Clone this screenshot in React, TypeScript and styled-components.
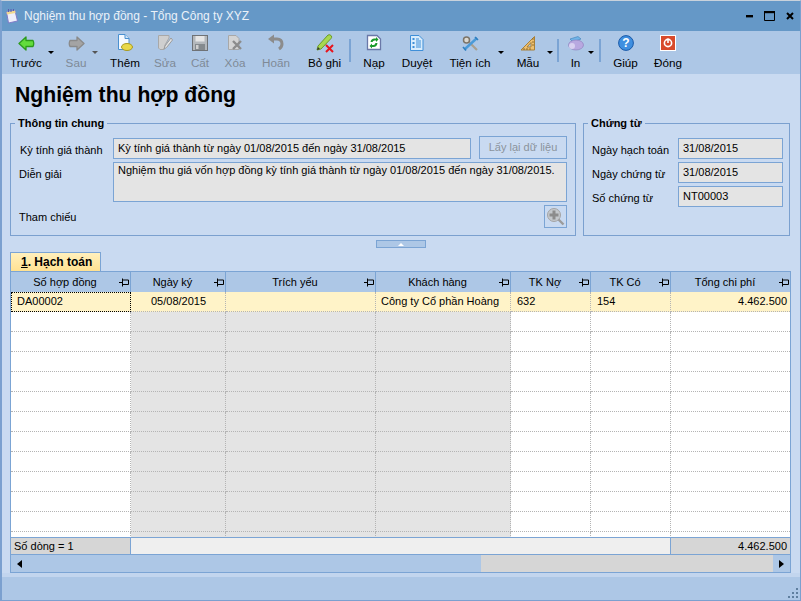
import React from 'react'
import styled, { createGlobalStyle } from 'styled-components'

const GlobalStyle = createGlobalStyle`
  html, body {
    margin: 0;
    padding: 0;
    background: #c9daf1;
  }
  body {
    font-family: "Liberation Sans", Arial, sans-serif;
    font-size: 11px;
    color: #000;
  }
`

const Window = styled.div`
  box-sizing: border-box;
  width: 801px;
  height: 601px;
  display: flex;
  flex-direction: column;
  overflow: hidden;
  border-top: 1px solid #c8d2dc;
  border-left: 2px solid #7ba0cf;
  border-right: 1px solid #7ba0cf;
  border-bottom: 1px solid #7ba0cf;
  background: #c9daf1;
`

const TitleBar = styled.div`
  height: 30px;
  flex: none;
  margin-left: -2px;
  padding-left: 5px;
  display: flex;
  align-items: center;
  background: #6598c7;
  color: #eaf1f9;
  font-size: 12px;
`

const TitleText = styled.span`
  margin-left: 5px;
  flex: 1;
`

const WindowControls = styled.div`
  display: flex;
  align-items: center;
  gap: 11px;
  padding-right: 6px;
`

const Toolbar = styled.div`
  height: 43px;
  flex: none;
  display: flex;
  background: #adc7e6;
`

const ToolButton = styled.div<{ $w: number; $mr?: number; $off?: boolean }>`
  position: relative;
  flex: none;
  box-sizing: border-box;
  width: ${(p) => p.$w}px;
  margin-right: ${(p) => p.$mr ?? 0}px;
  display: flex;
  flex-direction: column;
  align-items: center;
  padding-top: 2px;
  color: ${(p) => (p.$off ? '#7f8a96' : '#000')};
  white-space: nowrap;
`

const ToolIcon = styled.div`
  height: 20px;
  width: 20px;
  display: flex;
  align-items: center;
  justify-content: center;
`

const ToolLabel = styled.span`
  margin-top: 2px;
  line-height: 15px;
  font-size: 11.7px;
`

const Caret = styled.span<{ $left: number; $off?: boolean }>`
  position: absolute;
  left: ${(p) => p.$left}px;
  top: 20px;
  border-left: 3px solid transparent;
  border-right: 3px solid transparent;
  border-top: 3px solid ${(p) => (p.$off ? '#555' : '#000')};
`

const ToolSep = styled.div`
  flex: none;
  width: 2px;
  height: 23px;
  margin-top: 8px;
  background: #7ba4d4;
`

const Content = styled.main`
  flex: 1;
  min-height: 0;
  display: flex;
  flex-direction: column;
  padding: 0 9px 0 8px;
`

const PageTitle = styled.h1`
  margin: 6px 0 0 5px;
  height: 30px;
  line-height: 30px;
  font-size: 21.2px;
  font-weight: bold;
  flex: none;
`

const Groups = styled.div`
  flex: none;
  display: flex;
  gap: 7px;
  margin-top: 6px;
`

const Group = styled.fieldset<{ $w: number }>`
  box-sizing: border-box;
  width: ${(p) => p.$w}px;
  height: 120px;
  margin: 0;
  min-width: 0;
  padding: 8px 8px 0 8px;
  border: 1px solid #7ba0cf;
`

const GroupTitle = styled.legend`
  margin-left: -4px;
  padding: 0 3px;
  height: 14px;
  line-height: 14px;
  font-weight: bold;
  font-size: 11px;
`

const Field = styled.div<{ $h?: number; $gap?: number }>`
  display: flex;
  align-items: flex-start;
  height: ${(p) => p.$h ?? 21}px;
  margin-top: ${(p) => p.$gap ?? 0}px;
`

const FieldLabel = styled.label<{ $w: number; $dy?: number; $dx?: number }>`
  flex: none;
  box-sizing: border-box;
  width: ${(p) => p.$w}px;
  line-height: 15px;
  padding-top: ${(p) => p.$dy ?? 5}px;
  padding-left: ${(p) => p.$dx ?? 0}px;
`

const ReadOnly = styled.div<{ $w: number; $h?: number }>`
  box-sizing: border-box;
  flex: none;
  width: ${(p) => p.$w}px;
  height: ${(p) => p.$h ?? 21}px;
  padding: 2px 4px;
  line-height: 15px;
  background: #e4e4e4;
  border: 1px solid #7ba4d4;
  white-space: nowrap;
  overflow: hidden;
`

const MultiLine = styled(ReadOnly)`
  padding-top: 0;
`

const FetchButton = styled.div`
  box-sizing: border-box;
  flex: none;
  width: 88px;
  height: 23px;
  margin-left: 8px;
  margin-top: -2px;
  border: 1px solid #7ba4d4;
  color: #8b939c;
  text-align: center;
  line-height: 21px;
  background: #c9daf1;
`

const ZoomButton = styled.div`
  box-sizing: border-box;
  width: 23px;
  height: 23px;
  margin-left: auto;
  border: 1px solid #7ba4d4;
  display: flex;
  align-items: center;
  justify-content: center;
`

const Splitter = styled.div`
  flex: none;
  box-sizing: border-box;
  align-self: center;
  width: 50px;
  height: 8px;
  margin: 4px 0 0 1px;
  background: #adc7e6;
  border: 1px solid #7ba4d4;
  display: flex;
  align-items: center;
  justify-content: center;
`

const SplitterArrow = styled.span`
  border-left: 3px solid transparent;
  border-right: 3px solid transparent;
  border-bottom: 3px solid #fff;
`

const Tab = styled.div`
  flex: none;
  box-sizing: border-box;
  width: 91px;
  height: 20px;
  margin-top: 4px;
  border: 1px solid #7ba4d4;
  border-bottom: none;
  background: linear-gradient(#fff0bd, #ffe08f);
  font-weight: bold;
  line-height: 19px;
  padding-left: 10px;
  font-size: 12px;

  u {
    text-decoration: underline;
  }
`

const GridFrame = styled.div`
  flex: none;
  box-sizing: border-box;
  width: 781px;
  height: 302px;
  margin-top: -1px;
  border: 1px solid #7ba4d4;
  display: flex;
  flex-direction: column;
  background: #fff;
`

const COLUMNS = '120px 95px 150px 135px 80px 80px 119px'

const HeaderRow = styled.div`
  flex: none;
  display: grid;
  grid-template-columns: ${COLUMNS};
  height: 20px;
  background: #adc7e6;
`

const HeaderCell = styled.div`
  position: relative;
  box-sizing: border-box;
  border-right: 1px solid #7ba4d4;
  text-align: center;
  line-height: 20px;
  padding-right: 11px;

  &:last-child {
    border-right: none;
  }

  svg {
    position: absolute;
    right: 1px;
    top: 6px;
  }
`

const GridBody = styled.div`
  flex: 1;
  min-height: 0;
  overflow: hidden;
`

const DataRow = styled.div<{ $current?: boolean }>`
  display: grid;
  grid-template-columns: ${COLUMNS};
  height: 20px;
  background: ${(p) => (p.$current ? '#fff3c8' : '#fff')};
`

const DataCell = styled.div<{ $shade?: boolean; $right?: boolean; $focus?: boolean; $pl?: number }>`
  box-sizing: border-box;
  height: 20px;
  line-height: 19px;
  padding: 0 3px 0 ${(p) => p.$pl ?? 6}px;
  white-space: nowrap;
  overflow: hidden;
  text-align: ${(p) => (p.$right ? 'right' : 'left')};
  background: ${(p) => (p.$shade ? '#e4e4e4' : 'transparent')};
  border-right: 1px dotted #b4b4b4;
  border-bottom: 1px dotted #b4b4b4;
  ${(p) => p.$focus && 'outline: 1px dotted #000; outline-offset: -1px;'}

  &:last-child {
    border-right: none;
  }
`

const SummaryRow = styled.div`
  flex: none;
  display: grid;
  grid-template-columns: 120px 540px 119px;
  height: 16px;
  border-top: 1px solid #7ba4d4;
  border-bottom: 1px solid #7ba4d4;
  line-height: 16px;
`

const SummaryCell = styled.div<{ $blank?: boolean; $right?: boolean }>`
  box-sizing: border-box;
  padding: 0 3px;
  background: ${(p) => (p.$blank ? '#efefef' : '#d6d6d6')};
  text-align: ${(p) => (p.$right ? 'right' : 'left')};
  border-right: 1px solid #7ba4d4;

  &:last-child {
    border-right: none;
  }
`

const ScrollBar = styled.div`
  flex: none;
  height: 17px;
  display: flex;
  align-items: stretch;
  background: #adc7e6;
`

const ScrollArrow = styled.div<{ $w: number }>`
  flex: none;
  width: ${(p) => p.$w}px;
  display: flex;
  align-items: center;
  justify-content: center;
`

const ScrollTrack = styled.div`
  flex: 1;
`

const ScrollThumb = styled.div`
  flex: none;
  width: 292px;
  background: #d6d6d6;
`

const StatusBar = styled.div`
  height: 23px;
  flex: none;
  display: flex;
  justify-content: flex-end;
  align-items: flex-end;
  background: #adc7e6;
  box-shadow: 0 -4px 0 #c2d5ee;
  margin: 0 0 0 -2px;
`

const BackIcon = () => (
  <svg width="17" height="15" viewBox="0 0 17 15">
    <path d="M8 1 L1 7.5 L8 14 L8 10.5 L15 10.5 Q16.5 7.5 15 4.5 L8 4.5 Z" fill="#62dc3c" stroke="#2c9a1c" strokeWidth="1.3" strokeLinejoin="round" />
  </svg>
)

const ForwardIcon = () => (
  <svg width="17" height="15" viewBox="0 0 17 15">
    <path d="M9 1 L16 7.5 L9 14 L9 10.5 L2 10.5 Q.5 7.5 2 4.5 L9 4.5 Z" fill="#a4a4a4" stroke="#8a8a8a" strokeWidth="1.3" strokeLinejoin="round" />
  </svg>
)

const AddIcon = () => (
  <svg width="18" height="18" viewBox="0 0 18 18">
    <path d="M2.5 .5 H9 L13 4.5 V15.5 H2.5 Z" fill="#f4f9ff" stroke="#4a90d0" />
    <path d="M9 .5 V4.5 H13" fill="#cfe4f8" stroke="#4a90d0" />
    <ellipse cx="11" cy="13" rx="5.5" ry="3.5" fill="#e8d84a" stroke="#a89a20" />
  </svg>
)

const EditIcon = () => (
  <svg width="18" height="18" viewBox="0 0 18 18">
    <path d="M2.5 1.5 H13 V4 L9 11 L8 15.5 H4 L2.5 14 Z" fill="#cfcfcf" stroke="#a8a8a8" />
    <path d="M15 4 L9 12 L8 15 L10.5 13.5 L16.5 6 Z" fill="#e4e4e4" stroke="#9c9c9c" />
  </svg>
)

const SaveIcon = () => (
  <svg width="16" height="16" viewBox="0 0 16 16">
    <rect x=".5" y=".5" width="15" height="15" fill="#b4b8bc" stroke="#6f7276" />
    <rect x="3.5" y="1" width="9" height="5.5" fill="#e6e6e6" />
    <rect x="3" y="9" width="10" height="6" fill="#858a8e" />
    <rect x="4" y="10" width="2.5" height="4" fill="#d0d0d0" />
  </svg>
)

const DeleteIcon = () => (
  <svg width="18" height="18" viewBox="0 0 18 18">
    <path d="M2.5 1.5 H10 L13 4.5 V15.5 H2.5 Z" fill="#d4d4d4" stroke="#a8a8a8" />
    <path d="M7 7 L15 15 M15 7 L7 15" stroke="#8c8c8c" strokeWidth="2.4" />
  </svg>
)

const UndoIcon = () => (
  <svg width="18" height="18" viewBox="0 0 18 18">
    <path d="M5 5 H10 Q15 5 15 10 Q15 13 12 15" fill="none" stroke="#8c8c8c" strokeWidth="3" />
    <path d="M1 5 L7 .5 V9.5 Z" fill="#8c8c8c" />
  </svg>
)

const CancelIcon = () => (
  <svg width="20" height="20" viewBox="0 0 20 20">
    <path d="M3 13 L13 2 Q15 1 16.5 3 Q17 4.5 16 5.5 L6 16 L2 17 Z" fill="#a8d850" stroke="#6a9a28" />
    <path d="M2 17 L3 14 L5 16 Z" fill="#333" />
    <path d="M11 12 L18 19 M18 12 L11 19" stroke="#e8141c" strokeWidth="2" />
  </svg>
)

const ReloadIcon = () => (
  <svg width="16" height="18" viewBox="0 0 16 18">
    <path d="M1.5 1.5 H11 L14.5 5 V15.5 H1.5 Z" fill="#fff" stroke="#6a78a8" strokeWidth="1.3" />
    <path d="M4.5 8 Q5 4.5 8.5 4.5 H10 V3 L12.5 5.5 L10 8 V6.5 H8.5 Q7 6.5 6.5 8 Z" fill="#1a9a2a" />
    <path d="M11.5 9 Q11 13 7.5 13 H6 V14.5 L3.5 12 L6 9.5 V11 H7.5 Q9 11 9.5 9 Z" fill="#1a9a2a" />
  </svg>
)

const BrowseIcon = () => (
  <svg width="14" height="16" viewBox="0 0 14 16">
    <path d="M.5 .5 H9 L13 4.5 V15.5 H.5 Z" fill="#d8ecfc" stroke="#3f8fd8" />
    <path d="M2.5 3 H4.5 V5 H2.5 Z M2.5 7 H4.5 V9 H2.5 Z M2.5 11 H4.5 V13 H2.5 Z" fill="#3f8fd8" />
    <path d="M6 4 H9 M6 8 H11 M6 12 H11 M6 10 H11 M6 6 H11" stroke="#3f8fd8" />
  </svg>
)

const ToolsIcon = () => (
  <svg width="17" height="15" viewBox="0 0 17 15">
    <path d="M5 4 L15 14" stroke="#a8a090" strokeWidth="2.2" />
    <circle cx="4.5" cy="4" r="3" fill="#dcd8d0" stroke="#7c7468" strokeWidth="1.5" />
    <path d="M15 2 L3 13" stroke="#4a9ad8" strokeWidth="2.4" />
    <path d="M13 1 L16 4" stroke="#2f7fc0" strokeWidth="1.6" />
    <path d="M1 11 L4 14.5" stroke="#2f7fc0" strokeWidth="1.6" />
  </svg>
)

const RulerIcon = () => (
  <svg width="16" height="15" viewBox="0 0 16 15">
    <path d="M14.5 .5 V14 H1 Z" fill="#eec070" stroke="#a88038" />
    <path d="M11 6.5 V11 H7 Z" fill="#adc7e6" stroke="#a88038" />
    <path d="M12 3 H14 M12 6 H14 M12 9 H14 M4 12 V14 M7 12 V14 M10 12 V14" stroke="#7c5a20" strokeWidth=".8" />
  </svg>
)

const PrinterIcon = () => (
  <svg width="16" height="15" viewBox="0 0 16 15">
    <path d="M2 3 L10 .5 L13 3 L5 6 Z" fill="#6fb4e8" stroke="#3f80b8" strokeWidth=".6" />
    <ellipse cx="8" cy="9" rx="7.5" ry="5" fill="#b8a8e0" stroke="#8a7ab8" strokeWidth=".6" />
    <ellipse cx="4" cy="10" rx="3" ry="3" fill="#d8d0f0" />
  </svg>
)

const HelpIcon = () => (
  <svg width="16" height="16" viewBox="0 0 16 16">
    <circle cx="8" cy="8" r="7.4" fill="#3f8fe0" stroke="#1a5aa8" />
    <text x="8" y="12" textAnchor="middle" fontFamily="Liberation Sans" fontWeight="bold" fontSize="12" fill="#fff">
      ?
    </text>
  </svg>
)

const PowerIcon = () => (
  <svg width="16" height="16" viewBox="0 0 16 16">
    <rect x=".5" y=".5" width="15" height="15" fill="#d84a2c" stroke="#fff" />
    <circle cx="8" cy="8" r="3.6" fill="none" stroke="#fff" strokeWidth="1.6" />
    <path d="M8 3.5 V8" stroke="#fff" strokeWidth="1.6" />
  </svg>
)

const NoteIcon = () => (
  <svg width="14" height="15" viewBox="0 0 14 15">
    <path d="M1.5 3 L10 1.5 L12.5 12 L3.5 14 Z" fill="#eeeefa" stroke="#7f7cc8" />
    <path d="M1.5 3 L10 1.5 L10.6 4 L2 5.5 Z" fill="#f0d890" />
    <path d="M3.5 0 V3 M6 0 V3 M8.5 0 V2" stroke="#5a5ab0" />
  </svg>
)

const MagnifierIcon = () => (
  <svg width="19" height="19" viewBox="0 0 19 19">
    <circle cx="8" cy="8" r="6.5" fill="#c4c8cc" stroke="#a4a4a4" />
    <path d="M12.5 12.5 L17.5 17.5" stroke="#9c9c9c" strokeWidth="2.4" />
    <path d="M8 3.5 V12.5 M3.5 8 H12.5" stroke="#8c8c8c" strokeWidth="3" />
  </svg>
)

const PinIcon = () => (
  <svg width="10" height="9" viewBox="0 0 10 9">
    <path d="M0 4.5 H3 M3.5 .5 V8.5 M3.5 2 H9.5 V6.5 H3.5" fill="none" stroke="#000" />
  </svg>
)

const tools = [
  { label: 'Trước', w: 48, icon: <BackIcon />, caret: 46 },
  { label: 'Sau', w: 52, icon: <ForwardIcon />, off: true, caret: 42 },
  { label: 'Thêm', w: 46, icon: <AddIcon /> },
  { label: 'Sửa', w: 34, icon: <EditIcon />, off: true },
  { label: 'Cất', w: 36, icon: <SaveIcon />, off: true },
  { label: 'Xóa', w: 34, icon: <DeleteIcon />, off: true },
  { label: 'Hoãn', w: 48, icon: <UndoIcon />, off: true },
  { label: 'Bỏ ghi', w: 49, icon: <CancelIcon /> },
  { sep: true },
  { label: 'Nạp', w: 46, icon: <ReloadIcon /> },
  { label: 'Duyệt', w: 40, icon: <BrowseIcon /> },
  { label: 'Tiện ích', w: 66, icon: <ToolsIcon />, caret: 61 },
  { label: 'Mẫu', w: 50, mr: 4, icon: <RulerIcon />, caret: 44 },
  { sep: true },
  { label: 'In', w: 33, mr: 7, icon: <PrinterIcon />, caret: 29 },
  { sep: true },
  { label: 'Giúp', w: 49, icon: <HelpIcon /> },
  { label: 'Đóng', w: 36, icon: <PowerIcon /> },
]

const headers = ['Số hợp đồng', 'Ngày ký', 'Trích yếu', 'Khách hàng', 'TK Nợ', 'TK Có', 'Tổng chi phí']

const emptyRows = Array.from({ length: 12 }, (_, i) => i)

const App: React.FC = () => {
  return (
    <Window>
      <GlobalStyle />
      <TitleBar>
        <NoteIcon />
        <TitleText>Nghiệm thu hợp đồng - Tổng Công ty XYZ</TitleText>
        <WindowControls>
          <svg width="7" height="3" viewBox="0 0 7 3">
            <rect width="7" height="2.4" fill="#000" />
          </svg>
          <svg width="11" height="10" viewBox="0 0 11 10">
            <path d="M.5 .5 H10.5 V9.5 H.5 Z" fill="none" stroke="#000" />
            <rect width="11" height="2.2" fill="#000" />
          </svg>
          <svg width="8" height="8" viewBox="0 0 8 8">
            <path d="M1 1 L7 7 M7 1 L1 7" stroke="#000" strokeWidth="2" />
          </svg>
        </WindowControls>
      </TitleBar>

      <Toolbar>
        {tools.map((t, i) =>
          t.sep ? (
            <ToolSep key={i} />
          ) : (
            <ToolButton key={i} $w={t.w as number} $mr={t.mr} $off={t.off}>
              <ToolIcon>{t.icon}</ToolIcon>
              <ToolLabel>{t.label}</ToolLabel>
              {t.caret !== undefined && <Caret $left={t.caret} $off={t.off} />}
            </ToolButton>
          ),
        )}
      </Toolbar>

      <Content>
        <PageTitle>Nghiệm thu hợp đồng</PageTitle>

        <Groups>
          <Group $w={566}>
            <GroupTitle>Thông tin chung</GroupTitle>
            <Field>
              <FieldLabel $w={94} $dx={1}>
                Kỳ tính giá thành
              </FieldLabel>
              <ReadOnly $w={358}>Kỳ tính giá thành từ ngày 01/08/2015 đến ngày 31/08/2015</ReadOnly>
              <FetchButton>Lấy lại dữ liệu</FetchButton>
            </Field>
            <Field $h={40} $gap={3}>
              <FieldLabel $w={94}>Diễn giải</FieldLabel>
              <MultiLine $w={454} $h={40}>
                Nghiệm thu giá vốn hợp đồng kỳ tính giá thành từ ngày 01/08/2015 đến ngày 31/08/2015.
              </MultiLine>
            </Field>
            <Field $h={23} $gap={3}>
              <FieldLabel $w={94}>Tham chiếu</FieldLabel>
              <ZoomButton>
                <MagnifierIcon />
              </ZoomButton>
            </Field>
          </Group>

          <Group $w={207}>
            <GroupTitle>Chứng từ</GroupTitle>
            <Field>
              <FieldLabel $w={86}>Ngày hạch toán</FieldLabel>
              <ReadOnly $w={105}>31/08/2015</ReadOnly>
            </Field>
            <Field $gap={3}>
              <FieldLabel $w={86}>Ngày chứng từ</FieldLabel>
              <ReadOnly $w={105}>31/08/2015</ReadOnly>
            </Field>
            <Field $gap={3}>
              <FieldLabel $w={86}>Số chứng từ</FieldLabel>
              <ReadOnly $w={105}>NT00003</ReadOnly>
            </Field>
          </Group>
        </Groups>

        <Splitter>
          <SplitterArrow />
        </Splitter>

        <Tab>
          <u>1</u>. Hạch toán
        </Tab>

        <GridFrame>
          <HeaderRow>
            {headers.map((h) => (
              <HeaderCell key={h}>
                {h}
                <PinIcon />
              </HeaderCell>
            ))}
          </HeaderRow>
          <GridBody>
            <DataRow $current>
              <DataCell $focus>DA00002</DataCell>
              <DataCell $pl={20}>05/08/2015</DataCell>
              <DataCell />
              <DataCell $pl={5}>Công ty Cổ phần Hoàng</DataCell>
              <DataCell>632</DataCell>
              <DataCell>154</DataCell>
              <DataCell $right>4.462.500</DataCell>
            </DataRow>
            {emptyRows.map((r) => (
              <DataRow key={r}>
                <DataCell />
                <DataCell $shade />
                <DataCell $shade />
                <DataCell $shade />
                <DataCell />
                <DataCell />
                <DataCell />
              </DataRow>
            ))}
          </GridBody>
          <SummaryRow>
            <SummaryCell>Số dòng = 1</SummaryCell>
            <SummaryCell $blank />
            <SummaryCell $right>4.462.500</SummaryCell>
          </SummaryRow>
          <ScrollBar>
            <ScrollArrow $w={16}>
              <svg width="5" height="8" viewBox="0 0 5 8">
                <path d="M5 0 V8 L0 4 Z" fill="#000" />
              </svg>
            </ScrollArrow>
            <ScrollTrack />
            <ScrollThumb />
            <ScrollArrow $w={17}>
              <svg width="5" height="8" viewBox="0 0 5 8">
                <path d="M0 0 V8 L5 4 Z" fill="#000" />
              </svg>
            </ScrollArrow>
          </ScrollBar>
        </GridFrame>
      </Content>

      <StatusBar>
        <svg width="12" height="12" viewBox="0 0 12 12">
          <path d="M8 0 h2 v2 h-2 Z M4 4 h2 v2 h-2 Z M8 4 h2 v2 h-2 Z M0 8 h2 v2 h-2 Z M4 8 h2 v2 h-2 Z M8 8 h2 v2 h-2 Z" fill="#5f7f9f" />
        </svg>
      </StatusBar>
    </Window>
  )
}

export default App
